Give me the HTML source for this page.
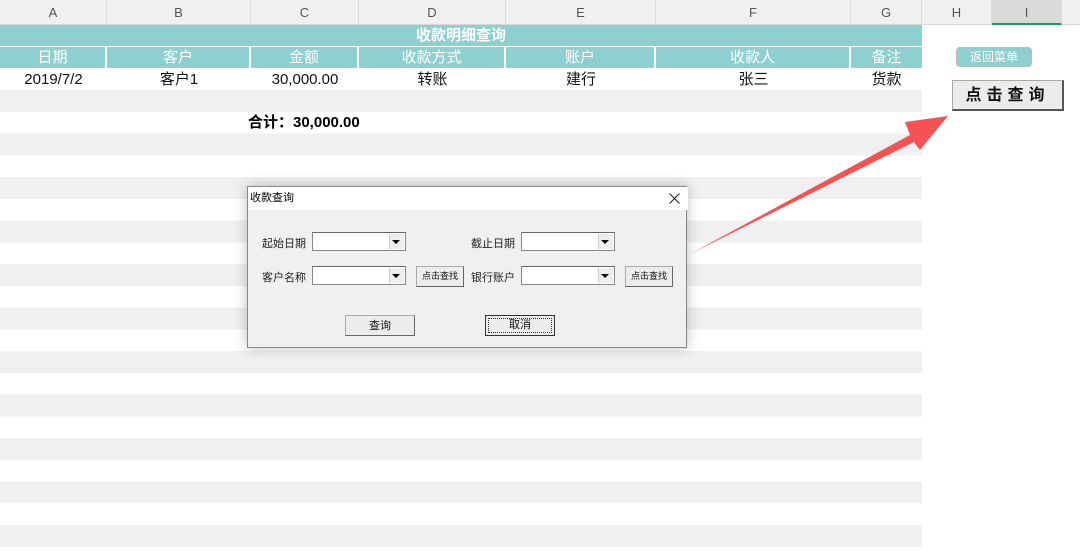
<!DOCTYPE html><html><head><meta charset="utf-8"><style>
body{margin:0;width:1080px;height:554px;position:relative;overflow:hidden;background:#fff;font-family:"Liberation Sans","Noto Sans CJK SC",sans-serif}
.a{position:absolute}
.hdr{top:0;height:25px;background:#f0f0f0;border-bottom:1px solid #d8d8d8;box-sizing:border-box}
.col{top:0;height:25px;line-height:25px;text-align:center;font-size:13px;color:#555;border-right:1px solid #dcdcdc;box-sizing:border-box}
.grid{left:0;top:90px;width:922px;height:464px;background:repeating-linear-gradient(#f0f0f0 0 22px,#fff 22px 43.5px)}
.th{top:46px;height:22px;line-height:22px;text-align:center;color:#fff;font-size:15px;background:#8ecfd0;border-right:2px solid #fff;border-top:1px solid #fff;box-sizing:border-box}
.td{top:68px;height:22px;line-height:23px;text-align:center;font-size:15px;color:#111}
.dlg{left:247px;top:186px;width:440px;height:162px;background:#f0f0f0;border:1px solid #888;box-sizing:border-box;box-shadow:0 0 12px rgba(0,0,0,.25);font-size:11px}
.lbl{font-size:11px;color:#222}
.cb{width:94px;height:19px;background:#fff;border:1px solid #888;border-top-color:#666;box-sizing:border-box}
.cb:after{content:"";position:absolute;right:1px;top:1px;width:14px;height:15px;background:#eee;border-left:1px solid #ccc}
.cb:before{content:"";position:absolute;right:5px;top:7px;border-left:4px solid transparent;border-right:4px solid transparent;border-top:4px solid #000;z-index:1}
.btn{background:#ececec;border:1px solid #aaa;border-right-color:#666;border-bottom-color:#666;box-sizing:border-box;text-align:center;color:#111}
</style></head><body>
<div class="a hdr" style="left:0;width:1080px"></div>
<div class="a col" style="left:0;width:107px">A</div>
<div class="a col" style="left:107px;width:144px">B</div>
<div class="a col" style="left:251px;width:108px">C</div>
<div class="a col" style="left:359px;width:147px">D</div>
<div class="a col" style="left:506px;width:150px">E</div>
<div class="a col" style="left:656px;width:195px">F</div>
<div class="a col" style="left:851px;width:71px">G</div>
<div class="a col" style="left:922px;width:70px">H</div>
<div class="a col" style="left:992px;width:70px;background:#dadada;border-bottom:2px solid #1e9a5a">I</div>
<div class="a grid"></div>
<div class="a" style="left:0;top:25px;width:922px;height:21px;background:#8ecfd0;color:#fff;font-weight:bold;font-size:15px;line-height:21px;text-align:center">收款明细查询</div>
<div class="a th" style="left:0;width:107px">日期</div>
<div class="a th" style="left:107px;width:144px">客户</div>
<div class="a th" style="left:251px;width:108px">金额</div>
<div class="a th" style="left:359px;width:147px">收款方式</div>
<div class="a th" style="left:506px;width:150px">账户</div>
<div class="a th" style="left:656px;width:195px">收款人</div>
<div class="a th" style="left:851px;width:71px;border-right:0">备注</div>
<div class="a td" style="left:0;width:107px">2019/7/2</div>
<div class="a td" style="left:107px;width:144px">客户1</div>
<div class="a td" style="left:251px;width:108px">30,000.00</div>
<div class="a td" style="left:359px;width:147px">转账</div>
<div class="a td" style="left:506px;width:150px">建行</div>
<div class="a td" style="left:656px;width:195px">张三</div>
<div class="a td" style="left:851px;width:71px">货款</div>
<div class="a" style="left:248px;top:113px;font-weight:bold;font-size:15px;line-height:20px">合计：30,000.00</div>
<div class="a" style="left:956px;top:47px;width:76px;height:20px;background:#8ecfd0;border:1px solid #bbb;border-radius:4px;box-sizing:border-box;color:#fff;font-size:12px;text-align:center;line-height:18px">返回菜单</div>
<div class="a btn" style="left:952px;top:80px;width:112px;height:31px;line-height:29px;font-weight:bold;font-size:16px;letter-spacing:5px;border-right:2px solid #555;border-bottom:2px solid #555">点击查询</div>
<div class="a dlg">
<div class="a" style="left:0;top:0;width:438px;height:23px;background:#fff;line-height:23px;padding-left:2px;font-size:11px">收款查询<svg style="position:absolute;right:8px;top:6px" width="11" height="11"><path d="M0.5 0.5L10.5 10.5M10.5 0.5L0.5 10.5" stroke="#222" stroke-width="1.1"/></svg></div>
<div class="a lbl" style="left:14px;top:48px">起始日期</div>
<div class="a cb" style="left:64px;top:45px"></div>
<div class="a lbl" style="left:223px;top:48px">截止日期</div>
<div class="a cb" style="left:273px;top:45px"></div>
<div class="a lbl" style="left:14px;top:82px">客户名称</div>
<div class="a cb" style="left:64px;top:79px"></div>
<div class="a btn" style="left:168px;top:79px;width:48px;height:21px;line-height:19px;font-size:9px">点击查找</div>
<div class="a lbl" style="left:223px;top:82px">银行账户</div>
<div class="a cb" style="left:273px;top:79px"></div>
<div class="a btn" style="left:377px;top:79px;width:48px;height:21px;line-height:19px;font-size:9px">点击查找</div>
<div class="a btn" style="left:97px;top:128px;width:70px;height:21px;line-height:21px">查询</div>
<div class="a btn" style="left:237px;top:128px;width:70px;height:21px;line-height:19px;border:1px solid #333;outline:1px dotted #333;outline-offset:-4px">取消</div>
</div>
<svg class="a" style="left:0;top:0" width="1080" height="554"><polygon points="690,254 910,135 905,122 948,116 920,150 914,142" fill="#f55353"/></svg>
</body></html>
